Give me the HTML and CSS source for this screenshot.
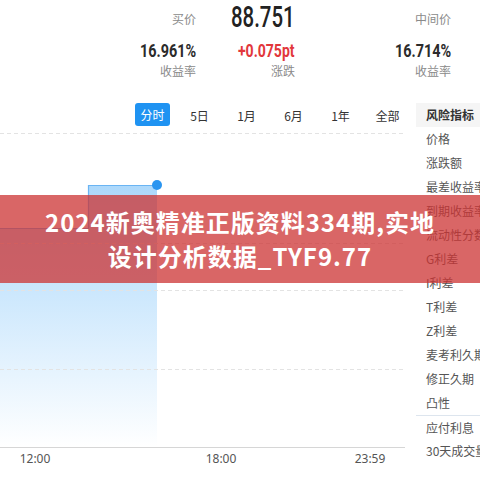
FILE: index.html
```html
<!DOCTYPE html>
<html lang="zh-CN">
<head>
<meta charset="utf-8">
<title>风险指标</title>
<link rel="stylesheet" href="styles.css">
</head>
<body>
<div class="page">
  <div class="quote">
    <div class="qcol qcol1">
      <div class="lbl">买价</div>
      <div><span class="num mid">16.961%</span></div>
      <div class="lbl">收益率</div>
    </div>
    <div class="qcol qcol2">
      <div><span class="num big">88.751</span></div>
      <div><span class="num mid red">+0.075pt</span></div>
      <div class="lbl">涨跌</div>
    </div>
    <div class="qcol qcol3">
      <div class="lbl">中间价</div>
      <div><span class="num mid">16.714%</span></div>
      <div class="lbl">收益率</div>
    </div>
  </div>

  <div class="main">
    <div class="chart-col">
      <div class="tabs">
        <div class="tab"><span class="tab-active">分时</span></div>
        <div class="tab">5日</div>
        <div class="tab">1月</div>
        <div class="tab">6月</div>
        <div class="tab">1年</div>
        <div class="tab">全部</div>
      </div>
      <svg class="chart" width="416" height="353" viewBox="0 127 416 353" xmlns="http://www.w3.org/2000/svg">
        <defs>
          <linearGradient id="fill" x1="0" y1="185" x2="0" y2="447" gradientUnits="userSpaceOnUse">
            <stop offset="0" stop-color="#acd8fb"/>
            <stop offset="0.4" stop-color="#cbe7fd"/>
            <stop offset="1" stop-color="#ffffff"/>
          </linearGradient>
        </defs>
        <path d="M0 228 H88 V185 H157 V446 H0 Z" fill="url(#fill)"/>
        <g stroke="#e3e3e3" stroke-width="1" stroke-dasharray="4 3">
          <line x1="0" y1="133.5" x2="405" y2="133.5"/>
          <line x1="0" y1="243.5" x2="405" y2="243.5"/>
          <line x1="0" y1="290.5" x2="405" y2="290.5"/>
          <line x1="0" y1="369.5" x2="405" y2="369.5"/>
        </g>
        <line x1="0" y1="447.5" x2="405" y2="447.5" stroke="#d6d6d6" stroke-width="1"/>
        <path d="M0 228.5 H88.5 V185.5 H156" fill="none" stroke="#6ab4f3" stroke-width="1.2"/>
        <circle cx="157" cy="185" r="5" fill="#2a95f0"/>
        <g class="axis-label">
          <text x="35" y="463" text-anchor="middle">12:00</text>
          <text x="221" y="463" text-anchor="middle">18:00</text>
          <text x="370" y="463" text-anchor="middle">23:59</text>
        </g>
      </svg>
    </div>
    <div class="panel">
      <div class="panel-head">风险指标</div>
      <div class="item">价格</div>
      <div class="item">涨跌额</div>
      <div class="item">最差收益率</div>
      <div class="item">到期收益率</div>
      <div class="item">流动性分数</div>
      <div class="item">G利差</div>
      <div class="item">I利差</div>
      <div class="item">T利差</div>
      <div class="item">Z利差</div>
      <div class="item">麦考利久期</div>
      <div class="item">修正久期</div>
      <div class="item">凸性</div>
      <div class="item item-sep">应付利息</div>
      <div class="item">30天成交量</div>
    </div>
  </div>

  <div class="banner">
    <div class="banner-line">2024新奥精准正版资料334期,实地</div>
    <div class="banner-line">设计分析数据_TYF9.77</div>
  </div>
</div>
</body>
</html>
```

FILE: styles.css
```css
html, body {
  margin: 0;
  padding: 0;
  background: #ffffff;
}

body {
  font-family: "Noto Sans CJK SC", "Noto Sans", sans-serif;
  color: #333333;
}

.page {
  position: relative;
  width: 480px;
  height: 480px;
  overflow: hidden;
}

/* quote header */
.quote {
  display: flex;
  height: 103px;
}

.qcol {
  display: grid;
  grid-template-rows: 38px 24px 18px;
  align-items: center;
  text-align: right;
}

.qcol1 { width: 196px; }
.qcol2 { width: 99px; }
.qcol3 { width: 156px; }

.lbl {
  font-size: 12px;
  line-height: 14px;
  color: #8a8a8a;
}

.num {
  display: inline-block;
  font-family: Roboto, "Liberation Sans", sans-serif;
  transform-origin: right center;
  white-space: nowrap;
}

.big {
  font-size: 30px;
  line-height: 30px;
  font-weight: 500;
  color: #222222;
  transform: scaleX(0.68);
  position: relative;
  top: -2px;
}

.mid {
  font-size: 18px;
  line-height: 20px;
  font-weight: 700;
  color: #2b2b2b;
  transform: scaleX(0.8);
}

.red {
  color: #e2373b;
  transform: scaleX(0.78);
}

/* main */
.main {
  display: flex;
  height: 377px;
}

.chart-col {
  width: 416px;
  display: flex;
  flex-direction: column;
}

.tabs {
  display: flex;
  height: 24px;
  padding-left: 129px;
}

.tab {
  width: 47px;
  height: 24px;
  display: flex;
  align-items: center;
  justify-content: center;
  font-size: 12px;
  color: #333333;
}

.tab-active {
  display: block;
  width: 35px;
  height: 23px;
  line-height: 23px;
  margin-top: -2px;
  text-align: center;
  background: #1f93f2;
  color: #ffffff;
  border-radius: 3px;
}

.chart {
  display: block;
}

.axis-label {
  font-family: "Noto Sans", sans-serif;
  font-size: 12px;
  fill: #555555;
}

/* panel */
.panel {
  width: 64px;
  display: flex;
  flex-direction: column;
}

.panel-head {
  height: 24px;
  line-height: 24px;
  padding-left: 10px;
  background: #f5f5f5;
  font-size: 12px;
  font-weight: 700;
  color: #333333;
  white-space: nowrap;
  overflow: hidden;
}

.item {
  height: 24px;
  line-height: 24px;
  padding-left: 10px;
  font-size: 12px;
  color: #555555;
  white-space: nowrap;
  overflow: hidden;
}

.item-sep {
  height: 23px;
  border-top: 1px solid #dde5ee;
}

/* overlay banner */
.banner {
  position: absolute;
  left: 0;
  top: 195px;
  width: 480px;
  height: 88px;
  background: rgba(204, 51, 51, 0.75);
  display: flex;
  flex-direction: column;
  justify-content: center;
  align-items: center;
}

.banner-line {
  font-family: "Noto Sans CJK SC", "Noto Sans", sans-serif;
  font-size: 24px;
  font-weight: 700;
  line-height: 34px;
  letter-spacing: 1px;
  color: #ffffff;
  white-space: nowrap;
}
```
